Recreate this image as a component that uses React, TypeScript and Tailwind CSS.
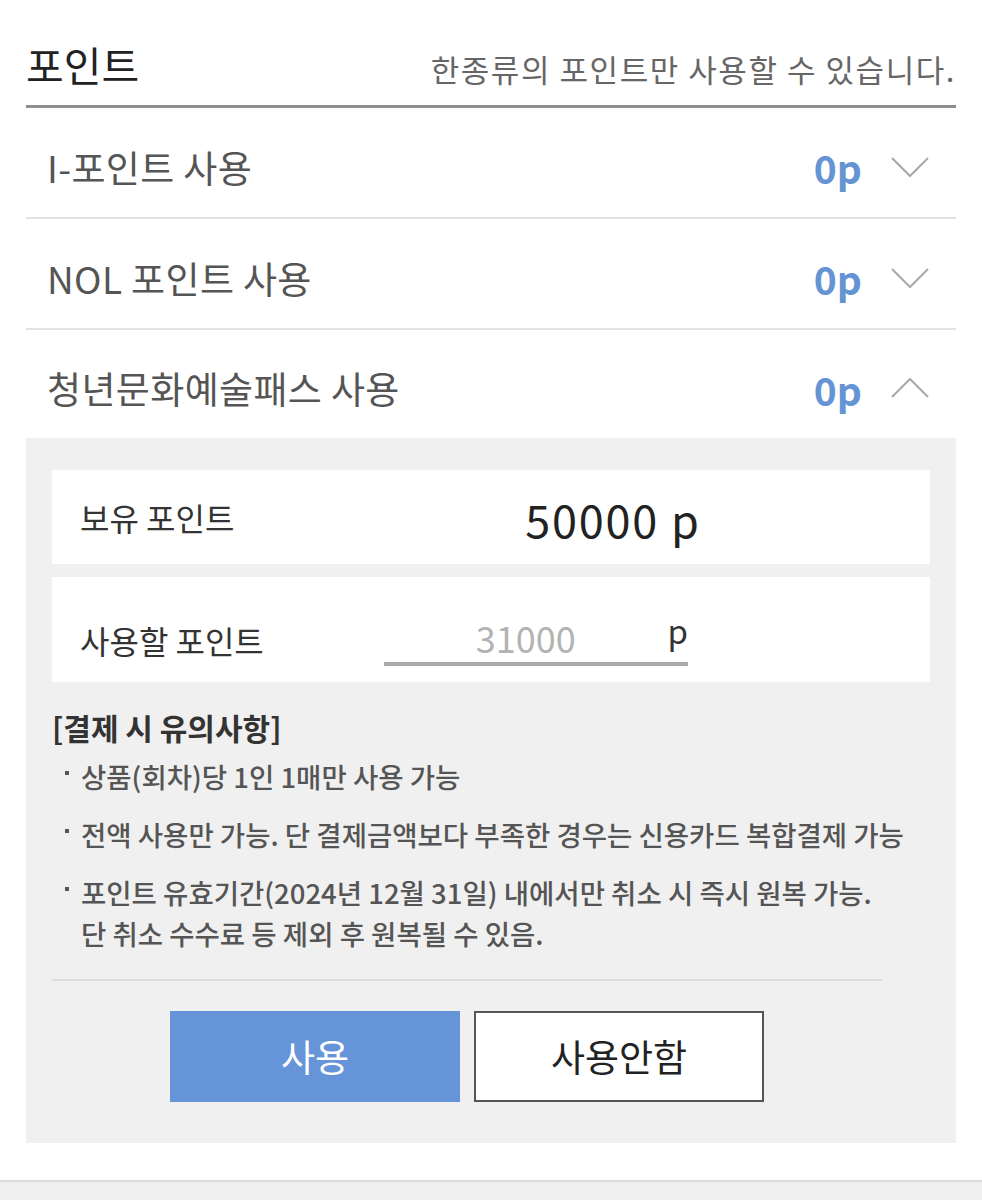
import { useState } from "react";

const rows = [
  { label: "I-포인트 사용", open: false },
  { label: "NOL 포인트 사용", open: false },
  { label: "청년문화예술패스 사용", open: true },
];

const notes = [
  "상품(회차)당 1인 1매만 사용 가능",
  "전액 사용만 가능. 단 결제금액보다 부족한 경우는 신용카드 복합결제 가능",
  "포인트 유효기간(2024년 12월 31일) 내에서만 취소 시 즉시 원복 가능.\n단 취소 수수료 등 제외 후 원복될 수 있음.",
];

const Chevron = ({ up }: { up: boolean }) => (
  <svg width="40" height="22" viewBox="0 0 40 22" fill="none" className="mt-[8px]">
    <polyline
      points={up ? "2,20 20,2 38,20" : "2,2 20,20 38,2"}
      stroke="#a9a9a9"
      strokeWidth="2"
    />
  </svg>
);

export default function App() {
  const [amount, setAmount] = useState("");

  return (
    <div className="h-[1200px] w-[982px] overflow-hidden bg-white font-['Noto_Sans_CJK_KR',sans-serif]">
      <div className="px-[26px]">
        {/* header */}
        <div className="flex h-[108px] items-baseline justify-between border-b-[3px] border-[#8e8e8e] pt-[42px]">
          <h2 className="text-[41px] leading-[44px] text-[#222]">포인트</h2>
          <p className="text-[31px] leading-[44px] tracking-[0.05em] text-[#666]">
            한종류의 포인트만 사용할 수 있습니다.
          </p>
        </div>

        {rows.map((row) => (
          <div
            key={row.label}
            className={
              row.open
                ? "flex h-[108px] items-center justify-between pl-[21px] pr-[26px]"
                : "flex h-[111px] items-center justify-between border-b-2 border-[#e2e2e2] pl-[21px] pr-[26px]"
            }
          >
            <span className="pt-[10px] text-[37px] tracking-[0.01em] text-[#555]">{row.label}</span>
            <div className="flex items-center gap-[28px]">
              <span className="pt-[10px] text-[39px] font-bold text-[#6594d4]">0p</span>
              <Chevron up={row.open} />
            </div>
          </div>
        ))}

        {/* expanded panel */}
        <div className="bg-[#f0f0f0] px-[26px] pb-[41px] pt-[32px]">
          <div className="flex h-[94px] items-center bg-white pl-[28px]">
            <span className="w-[304px] text-[32px] text-[#333]">보유 포인트</span>
            <span className="w-[458px] pt-[4px] text-center text-[45px] tracking-[0.04em] text-[#222]">
              50000 p
            </span>
          </div>

          <div className="mt-[13px] flex h-[105px] items-center bg-white pl-[28px]">
            <span className="w-[304px] pt-[20px] text-[32px] text-[#333]">사용할 포인트</span>
            <div className="flex w-[304px] items-end border-b-4 border-[#ababab] pb-[4px] pt-[18px]">
              <input
                value={amount}
                onChange={(e) => setAmount(e.target.value)}
                placeholder="31000"
                className="w-0 flex-1 bg-transparent pb-[2px] text-center text-[36px] leading-[38px] text-[#333] outline-none placeholder:text-[#b3b3b3]"
              />
              <span className="pb-[10px] text-[33px] leading-[36px] text-[#333]">p</span>
            </div>
          </div>

          {/* notice */}
          <div className="pt-[25px]">
            <p className="text-[30px] font-bold leading-[40px] text-[#333]">[결제 시 유의사항]</p>
            <ul className="mt-[9px] flex flex-col gap-[17px]">
              {notes.map((n) => (
                <li key={n} className="flex items-start">
                  <span className="mt-[15px] ml-[13px] mr-[12px] h-[4px] w-[4px] shrink-0 bg-[#555]" />
                  <span className="whitespace-pre-line text-[27.5px] font-medium leading-[41px] text-[#555]">
                    {n}
                  </span>
                </li>
              ))}
            </ul>
          </div>

          <div className="w-[830px]">
            <div className="mt-[25px] h-[2px] bg-[#dcdcdc]" />
            <div className="mt-[30px] flex justify-center gap-[14px]">
              <button className="h-[91px] w-[290px] bg-[#6594d8] text-[37px] text-white">사용</button>
              <button className="h-[91px] w-[290px] border-2 border-[#555] bg-white text-[37px] text-[#222]">
                사용안함
              </button>
            </div>
          </div>
        </div>
      </div>

      <div className="mt-[37px] h-[30px] border-t-2 border-[#dcdcdc] bg-[#f0f0f0]" />
    </div>
  );
}
